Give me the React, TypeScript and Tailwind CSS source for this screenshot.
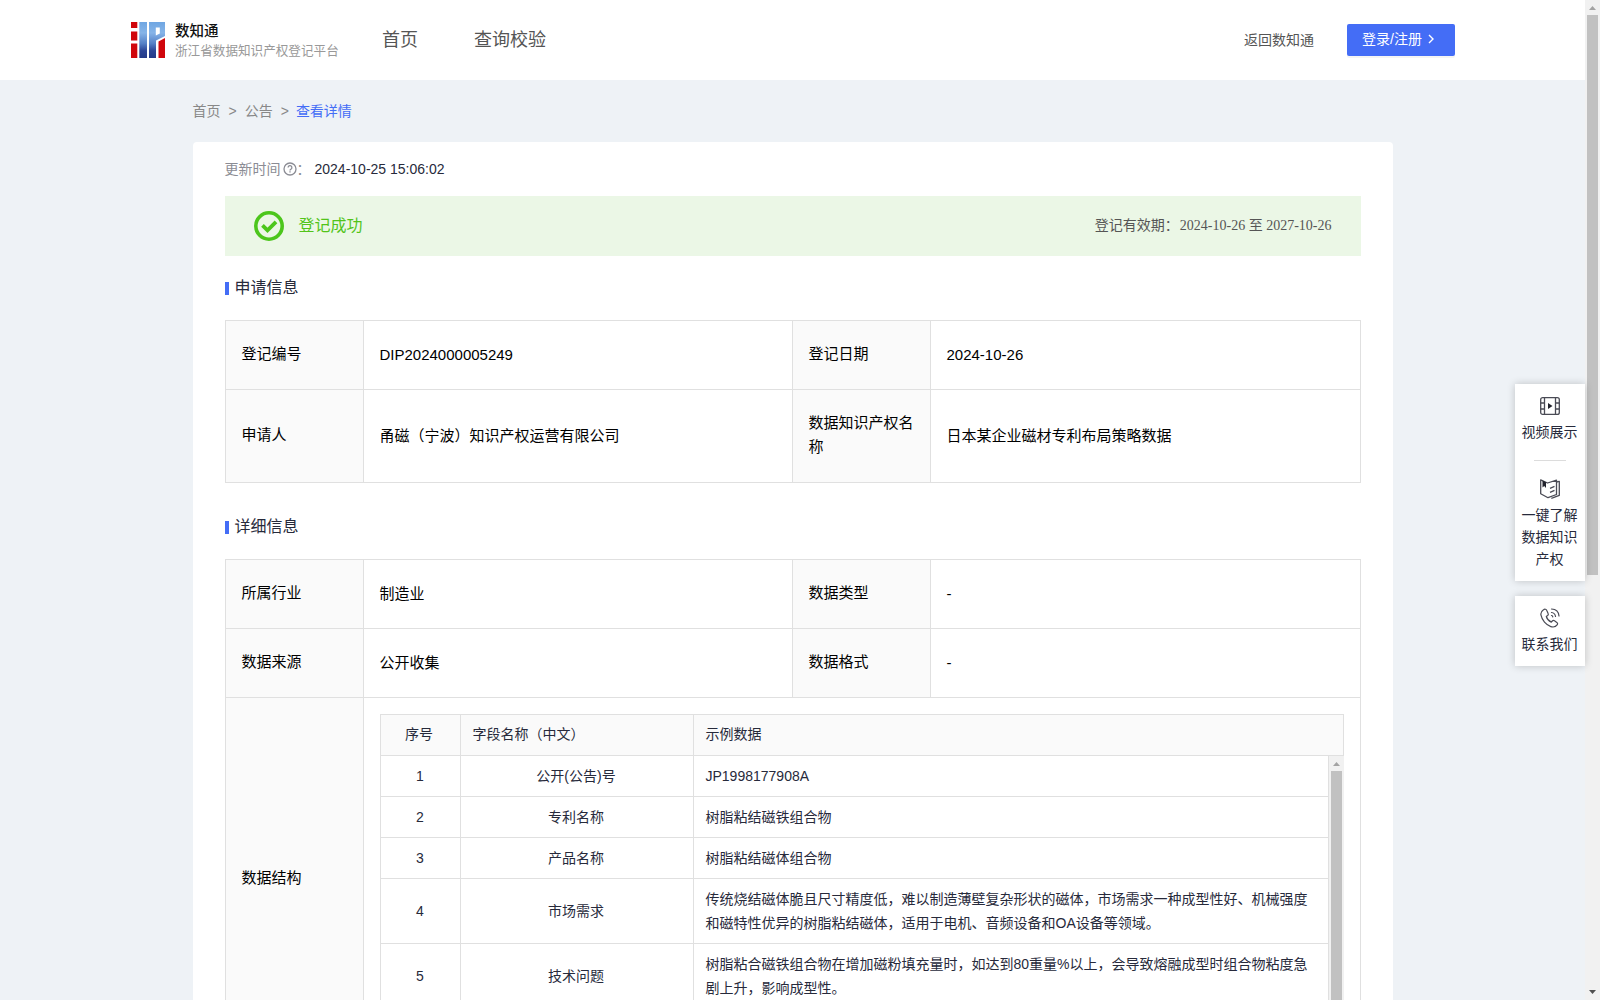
import type { ReactNode } from 'react'

interface FieldRow {
  name: string
  sample: string
}

const fields: FieldRow[] = [
  { name: '公开(公告)号', sample: 'JP1998177908A' },
  { name: '专利名称', sample: '树脂粘结磁铁组合物' },
  { name: '产品名称', sample: '树脂粘结磁体组合物' },
  {
    name: '市场需求',
    sample:
      '传统烧结磁体脆且尺寸精度低，难以制造薄壁复杂形状的磁体，市场需求一种成型性好、机械强度和磁特性优异的树脂粘结磁体，适用于电机、音频设备和OA设备等领域。'
  },
  {
    name: '技术问题',
    sample:
      '树脂粘合磁铁组合物在增加磁粉填充量时，如达到80重量%以上，会导致熔融成型时组合物粘度急剧上升，影响成型性。'
  }
]

function Logo() {
  return (
    <svg width="34" height="36" viewBox="0 0 34 36">
      <defs>
        <linearGradient id="blue" gradientUnits="userSpaceOnUse" x1="0" y1="0" x2="0" y2="36">
          <stop offset="0" stopColor="#6fa6e2" />
          <stop offset="0.3" stopColor="#86b4e8" />
          <stop offset="0.6" stopColor="#5580c6" />
          <stop offset="0.8" stopColor="#2c4596" />
          <stop offset="1" stopColor="#243a88" />
        </linearGradient>
      </defs>
      <path d="M0 0h6.300v6H0zM0 9.500h6.300v9H0zM0 21.500h6.300v14.500H0z" fill="#d0060c" />
      <path d="M8.300 0h7.700v36H8.300z" fill="url(#blue)" />
      <path d="M18 0h16v14l-9 4.500V36h-7z" fill="url(#blue)" />
      <path d="M24.800 5.500h4v6l-4 2z" fill="#fff" />
      <path d="M27.500 19.500L34 16v20h-6.500z" fill="#d0060c" />
    </svg>
  )
}

function Header() {
  return (
    <header className="flex h-20 items-center bg-white pl-[131px] pr-[130px]">
      <Logo />
      <div className="ml-2.5 w-[207px] whitespace-nowrap">
        <div className="mt-px text-[14.5px] leading-[18px] font-medium text-[#111]">数知通</div>
        <div className="mt-0.5 text-[12.6px] leading-[18px] text-[#999]">浙江省数据知识产权登记平台</div>
      </div>
      <nav className="flex gap-14 text-lg text-[#555]">
        <a>首页</a>
        <a>查询校验</a>
      </nav>
      <a className="mr-px ml-auto pb-px text-sm text-[#555]">返回数知通</a>
      <button className="ml-8 flex h-8 w-[108px] items-center rounded-xs bg-[#446df6] pb-0.5 pl-[15px] text-sm text-white shadow-[0_2px_0_rgba(0,0,0,0.045)]">
        登录/注册
        <svg className="ml-1.5" width="6" height="10" viewBox="0 0 6 10" fill="none" stroke="currentColor" strokeWidth="1.4">
          <path d="M1 1l4 4-4 4" />
        </svg>
      </button>
    </header>
  )
}

function SectionTitle({ children }: { children: ReactNode }) {
  return (
    <h2 className="flex h-16 items-center text-base text-[#272a3b]">
      <span className="mr-1.5 h-[13px] w-1 bg-[#446df6]" />
      <span className="pb-px">{children}</span>
    </h2>
  )
}

function Label({ children }: { children: ReactNode }) {
  return <div className="flex items-center border-r border-b border-[#e0e0e0] bg-[#fafafa] pr-3.5 pb-0.5 pl-4">{children}</div>
}

function Value({ children }: { children: ReactNode }) {
  return <div className="flex items-center border-r border-b border-[#e0e0e0] px-4">{children}</div>
}

function FieldTable() {
  return (
    <div className="w-[964px] border-t border-l border-[#e0e0e0] text-sm leading-6 text-[#272a3b]">
      <div className="grid h-[41px] grid-cols-[80px_233px_650px] bg-[#fafafa]">
        <div className="flex items-center justify-center border-r border-b border-[#e0e0e0] pr-0.5 pb-0.5">序号</div>
        <div className="flex items-center border-r border-b border-[#e0e0e0] px-3 pb-0.5">字段名称（中文）</div>
        <div className="flex items-center border-r border-b border-[#e0e0e0] px-3 pb-0.5">示例数据</div>
      </div>
      <div className="flex">
        <div className="w-[948px]">
          {fields.map((field, i) => (
            <div key={field.name} className="grid grid-cols-[80px_233px_635px]">
              <div className="flex items-center justify-center border-r border-b border-[#e0e0e0]">{i + 1}</div>
              <div className="flex items-center justify-center border-r border-b border-[#e0e0e0] pr-px pb-px">{field.name}</div>
              <div className="border-r border-b border-[#e0e0e0] px-3 py-2">{field.sample}</div>
            </div>
          ))}
        </div>
        <div className="flex w-[15px] flex-col items-center bg-[#f1f1f1]">
          <svg className="mt-1.5 h-1 w-[7px] shrink-0" viewBox="0 0 7 4">
            <path d="M3.500 0L7 4H0z" fill="#a3a3a3" />
          </svg>
          <div className="mt-[5px] w-[11px] grow bg-[#c1c1c1]" />
        </div>
      </div>
    </div>
  )
}

function FloatMenu() {
  return (
    <aside className="absolute top-[384px] right-[15px] w-[70px] text-center text-sm leading-[22px] text-[#272a3b]">
      <div className="flex h-[197px] flex-col items-center bg-white shadow-[0_0_8px_rgba(0,0,0,0.2)]">
        <svg className="mt-3 shrink-0" width="20" height="20" viewBox="0 0 20 20" fill="none" stroke="#4a4b55" strokeWidth="1.3">
          <rect x="0.700" y="1.600" width="18.600" height="16.800" rx="2" />
          <path d="M4.500 1.600v16.800M15.500 1.600v16.800M0.700 7h3.800M0.700 13h3.800M15.500 7h3.800M15.500 13h3.800" />
          <path d="M8 7v6l4.500-3z" fill="#22232d" stroke="none" />
        </svg>
        <div className="mt-[5px] pr-px">视频展示</div>
        <div className="mt-[17px] h-px w-8 shrink-0 bg-[#dcdcdc]" />
        <svg className="mt-[18px] shrink-0" width="20" height="20" viewBox="0 0 20 20" fill="none" stroke="#4a4b55" strokeWidth="1.3" strokeLinejoin="round">
          <path d="M0.700 0.800L7.500 4l9-2.800v14.300L8 18.700l-7.300-4z" />
          <path d="M16.500 3l2.800-.6v14l-6 2.300-2 .6" />
          <path d="M10 9.300l4.500-2M10 13.300l4.500-2" />
          <path d="M2.500 1.500v7l1.700-1.600L6 9V3.200z" fill="#22232d" stroke="none" />
        </svg>
        <div className="mt-[5px] mr-px w-14">一键了解数据知识产权</div>
      </div>
      <div className="mt-[15px] flex h-[70px] flex-col items-center bg-white shadow-[0_0_8px_rgba(0,0,0,0.2)]">
        <svg className="mt-3 shrink-0" width="20" height="20" viewBox="0 0 20 20" fill="none" stroke="#4a4b55" strokeWidth="1.2" strokeLinecap="round" strokeLinejoin="round">
          <path d="M3.500 1.700C1.500 3 .5 5 1 7.200c1 5 5 9.800 9.800 11.400 2.500.8 5 .2 6.500-2 .5-.8.3-1.700-.5-2.200l-2.300-1.600c-.8-.5-1.600-.4-2.200.2l-1 1.100c-2.600-1.200-4.300-3.200-5-5.600l1.300-1c.7-.6.9-1.300.5-2.100L6.800 2.600c-.6-1.400-2-1.800-3.300-.9z" />
          <path d="M11.500 4.500c2.200.3 3.700 1.700 4 4M11.500 1c4.300.2 7.200 3 7.500 7M11.500 7.500c.8.100 1.200.6 1.300 1.300" />
        </svg>
        <div className="mt-[5px] pr-px">联系我们</div>
      </div>
    </aside>
  )
}

// Page scrollbar track with its arrows
function PageScrollbar() {
  return (
    <div className="flex h-full w-[15px] shrink-0 flex-col items-center bg-[#f1f1f1]">
      <svg className="mt-1.5 h-1 w-[7px] shrink-0" viewBox="0 0 7 4">
        <path d="M3.500 0L7 4H0z" fill="#a3a3a3" />
      </svg>
      <div className="mt-[5px] h-[560px] w-[11px] bg-[#c1c1c1]" />
      <svg className="mt-auto mb-1.5 h-1 w-[7px] shrink-0" viewBox="0 0 7 4">
        <path d="M3.500 4L7 0H0z" fill="#505050" />
      </svg>
    </div>
  )
}

export default function App() {
  return (
    <div className="relative flex h-[1000px] w-[1600px] overflow-hidden bg-[#eef2f6] font-['Liberation_Sans','Noto_Sans_CJK_SC',sans-serif]">
      <div className="w-[1585px]">
        <Header />
        <main className="mx-auto w-[1200px]">
          <div className="flex h-[62px] items-center gap-2 pb-px text-sm text-[#888]">
            <span>首页</span>
            <span>&gt;</span>
            <span>公告</span>
            <span>&gt;</span>
            <span className="-ml-px text-[#446df6]">查看详情</span>
          </div>
          <div className="rounded-t bg-white px-8">
            <div className="flex h-[54px] items-center text-sm text-[#8b8c94]">
              <span className="pb-px">更新时间</span>
              <svg className="ml-0.5" width="14" height="14" viewBox="0 0 14 14" fill="none" stroke="currentColor" strokeWidth="1.3">
                <circle cx="7" cy="7" r="6" />
                <path d="M5.100 5.600a1.900 1.900 0 1 1 2.700 1.700c-.6.300-.8.500-.8 1.100M7 9.300v1.300" />
              </svg>
              <span className="w-[18px]">：</span>
              <span className="text-[#272a3b]">2024-10-25 15:06:02</span>
            </div>
            <div className="flex h-[60px] items-center bg-[#ebf7e6] pr-[29px] pl-[29px]">
              <svg width="30" height="30" viewBox="0 0 30 30" fill="none" stroke="#4cc61c">
                <circle cx="15" cy="15" r="13.200" strokeWidth="3.600" />
                <path d="M8.500 14.300l5 5 8.500-8.500" strokeWidth="3.800" />
              </svg>
              <span className="ml-[15px] pb-px text-base text-[#52c41a]">登记成功</span>
              <span className="ml-auto font-['Liberation_Serif','Noto_Sans_CJK_SC',serif] text-sm text-[#555]">
                <span className="mr-px">登记有效期：</span>2024-10-26 至 2027-10-26
              </span>
            </div>

            <SectionTitle>申请信息</SectionTitle>
            <div className="grid grid-cols-[138px_429px_138px_430px] grid-rows-[69px_93px] border-t border-l border-[#e0e0e0] text-[15px] leading-6 text-black">
              <Label>登记编号</Label>
              <Value>DIP2024000005249</Value>
              <Label>登记日期</Label>
              <Value>2024-10-26</Value>
              <Label>申请人</Label>
              <Value>甬磁（宁波）知识产权运营有限公司</Value>
              <Label>数据知识产权名称</Label>
              <Value>日本某企业磁材专利布局策略数据</Value>
            </div>

            <div className="pt-3">
              <SectionTitle>详细信息</SectionTitle>
            </div>
            <div className="grid grid-cols-[138px_429px_138px_430px] grid-rows-[69px_69px_362px] border-t border-l border-[#e0e0e0] text-[15px] leading-6 text-black">
              <Label>所属行业</Label>
              <Value>制造业</Value>
              <Label>数据类型</Label>
              <Value>-</Value>
              <Label>数据来源</Label>
              <Value>公开收集</Value>
              <Label>数据格式</Label>
              <Value>-</Value>
              <Label>数据结构</Label>
              <div className="col-span-3 border-r border-b border-[#e0e0e0] p-4">
                <FieldTable />
              </div>
            </div>
          </div>
        </main>
      </div>
      <PageScrollbar />
      <FloatMenu />
    </div>
  )
}
